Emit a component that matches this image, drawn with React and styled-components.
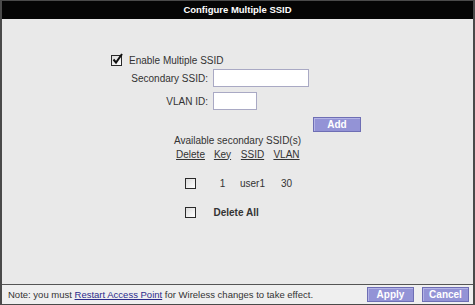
import React from "react";
import styled, { createGlobalStyle } from "styled-components";

const Global = createGlobalStyle`
  html, body { margin: 0; padding: 0; background: #e9e9e9; }
  body { font-family: "Liberation Sans", sans-serif; }
`;

const Frame = styled.div`
  width: 475px;
  height: 305px;
  box-sizing: border-box;
  border: 1px solid #4a4a4a;
  border-left-width: 2px;
  border-right-width: 2px;
  display: flex;
  flex-direction: column;
  background: #e9e9e9;
  font-family: "Liberation Sans", sans-serif;
  font-size: 10px;
  color: #333;
`;

const TitleBar = styled.div`
  height: 18px;
  background: #050505;
  color: #fff;
  font-weight: bold;
  font-size: 9.5px;
  display: flex;
  align-items: center;
  justify-content: center;
  padding-bottom: 1px;
  box-sizing: border-box;
`;

const Content = styled.div`
  flex: 1;
  padding-top: 35px;
  display: flex;
  flex-direction: column;
`;

const EnableRow = styled.label`
  display: flex;
  align-items: center;
  gap: 7px;
  padding-left: 109px;
  height: 12px;
`;

const Box = styled.span`
  position: relative;
  width: 9px;
  height: 9px;
  border: 1px solid #2a2a2a;
  background: linear-gradient(135deg, #dcdcdc, #ffffff);
  display: inline-block;
  flex: none;
`;

const Tick = styled.svg`
  position: absolute;
  left: 0px;
  top: -3px;
`;

const Check = ({ checked }) => (
  <Box>
    {checked && (
      <Tick width="11" height="12" viewBox="0 0 11 12">
        <path d="M1.5 6.5 L4 9.5 L10 1" fill="none" stroke="#111" strokeWidth="2" />
      </Tick>
    )}
  </Box>
);

const FormGrid = styled.div`
  display: grid;
  grid-template-columns: 206px auto;
  column-gap: 5px;
  row-gap: 5px;
  align-items: center;
  margin-top: 3px;
`;

const Label = styled.span`
  text-align: right;
`;

const TextInput = styled.div`
  width: ${(p) => p.$w}px;
  height: 18px;
  background: #fff;
  border: 1px solid #a9a9c4;
  box-sizing: border-box;
`;

const AddRow = styled.div`
  padding-left: 311px;
  margin-top: 7px;
`;

const Button = styled.button`
  width: ${(p) => p.$w}px;
  height: 15px;
  padding: 0;
  border: 1px solid #6e6eb4;
  box-shadow: inset 1px 1px 0 #b4b4e6;
  background: #9393d6;
  color: #fff;
  font-family: "Liberation Sans", sans-serif;
  font-weight: bold;
  font-size: 10px;
  line-height: 13px;
`;

const Caption = styled.div`
  text-align: center;
  margin-top: 3px;
  height: 12px;
`;

const Table = styled.div`
  display: grid;
  grid-template-columns: 34px 22px 30px 30px;
  column-gap: 4px;
  justify-content: center;
  justify-items: center;
  align-items: center;
  grid-template-rows: 12px 12px 12px;
  row-gap: 17px;
  margin-top: 1px;
`;

const Head = styled.span`
  text-decoration: underline;
  text-underline-offset: 1px;
`;

const Cell = styled.span``;

const SpanCell = styled.span`
  grid-column: 2 / span 3;
  justify-self: start;
  font-weight: bold;
  padding-left: 2px;
`;

const Footer = styled.div`
  height: 19px;
  border-top: 1px solid #555;
  background: #efefef;
  display: flex;
  align-items: center;
  padding: 0 4px 0 6px;
  gap: 8px;
  font-size: 9.5px;
`;

const Note = styled.span`
  flex: 1;
`;

const Link = styled.a`
  color: #2b2b8c;
  text-decoration: underline;
`;

export default function App() {
  return (
    <>
      <Global />
      <Frame>
        <TitleBar>Configure Multiple SSID</TitleBar>
        <Content>
          <EnableRow>
            <Check checked />
            Enable Multiple SSID
          </EnableRow>
          <FormGrid>
            <Label>Secondary SSID:</Label>
            <TextInput $w={96} />
            <Label>VLAN ID:</Label>
            <TextInput $w={44} />
          </FormGrid>
          <AddRow>
            <Button $w={48}>Add</Button>
          </AddRow>
          <Caption>Available secondary SSID(s)</Caption>
          <Table>
            <Head>Delete</Head>
            <Head>Key</Head>
            <Head>SSID</Head>
            <Head>VLAN</Head>
            <Check />
            <Cell>1</Cell>
            <Cell>user1</Cell>
            <Cell>30</Cell>
            <Check />
            <SpanCell>Delete All</SpanCell>
          </Table>
        </Content>
        <Footer>
          <Note>
            Note: you must <Link href="#">Restart Access Point</Link> for Wireless changes to take effect.
          </Note>
          <Button $w={47}>Apply</Button>
          <Button $w={47}>Cancel</Button>
        </Footer>
      </Frame>
    </>
  );
}
